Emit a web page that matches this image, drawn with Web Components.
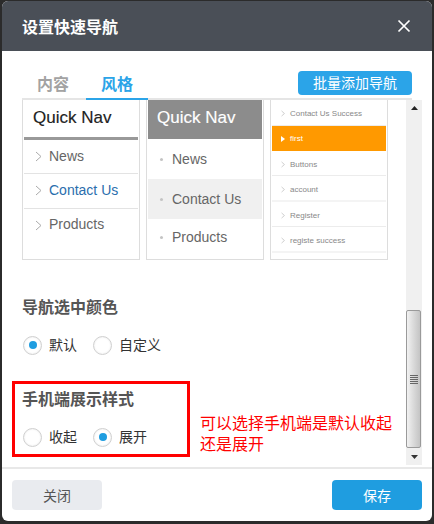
<!DOCTYPE html>
<html lang="zh">
<head>
<meta charset="utf-8">
<title>设置快速导航</title>
<style>
    html, body { margin: 0; height: 100%; background: #2b2b2b; }
    body { font-family: "Liberation Sans", "Noto Sans CJK SC", sans-serif; overflow: hidden; }
</style>
</head>
<body>
<quick-nav-dialog>
    <span slot="title">设置快速导航</span>
    <nav-tabs slot="tabs">
        <span slot="action">批量添加导航</span>
    </nav-tabs>
    <preview-row>
        <card-one></card-one>
        <card-two></card-two>
        <card-three></card-three>
    </preview-row>
    <option-group heading="导航选中颜色" style="margin-top:37px">
        <radio-item checked>默认</radio-item>
        <radio-item>自定义</radio-item>
    </option-group>
    <mobile-note>
        <option-group heading="手机端展示样式">
            <radio-item>收起</radio-item>
            <radio-item checked>展开</radio-item>
        </option-group>
        <span slot="note">可以选择手机端是默认收起还是展开</span>
    </mobile-note>
</quick-nav-dialog>

<script>
var tpl_dialog = document.createElement("template");
tpl_dialog.innerHTML = `
<style>
    :host { display: flex; flex-direction: column; box-sizing: border-box; width: 430px; height: 520px; margin: 1px 2px;
        background: #fff; border-radius: 6px; overflow: hidden; }
    #head { flex: none; height: 50px; background: #4a4f57; color: #fff; display: flex; align-items: center;
        justify-content: space-between; padding: 0 21px 0 20px; font-size: 16px; font-weight: 700; }
    #tabs { flex: none; padding: 20px 20px 0; }
    #middle { flex: none; height: 366px; display: flex; padding: 0 10px 0 20px; }
    #content { flex: 1; min-width: 0; position: relative; }
    #foot { flex: none; height: 52px; border-top: 2px solid #e8e8e8; margin-top: 1px; display: flex;
        justify-content: space-between; padding: 11px 10px 0; box-sizing: content-box; }
    .btn { width: 90px; height: 30px; border-radius: 4px; display: flex; align-items: center; justify-content: center; font-size: 14px; }
    #close { background: #e9ebef; color: #555; }
    #save { background: #1f9de0; color: #fff; }
</style>
<div id="head">
    <slot name="title"></slot>
    <svg width="14" height="14" viewBox="0 0 14 14"><path d="M1.5 1.5L12.5 12.5M12.5 1.5L1.5 12.5" stroke="#fff" stroke-width="1.7" fill="none"/></svg>
</div>
<div id="tabs"><slot name="tabs"></slot></div>
<div id="middle">
    <div id="content"><slot></slot></div>
    <fake-scrollbar></fake-scrollbar>
</div>
<div id="foot">
    <div class="btn" id="close">关闭</div>
    <div class="btn" id="save">保存</div>
</div>
`;
class QuickNavDialog extends HTMLElement {
    constructor(){
        super();
        this.attachShadow({mode:"open"}).appendChild(tpl_dialog.content.cloneNode(true));
    }
}

// tab strip with the blue button on the right
var tpl_tabs = document.createElement("template");
tpl_tabs.innerHTML = `
<style>
    :host { display: flex; height: 29px; box-sizing: border-box; border-bottom: 2px solid #e5e5e5; align-items: flex-start; }
    .tab { width: 62px; height: 29px; box-sizing: border-box; margin-right: 2px; text-align: center; font-size: 16px; font-weight: 700; line-height: 28px; color: #a3a3a3; }
    .tab.on { color: #2ba4e8; border-bottom: 2px solid #2ba4e8; }
    #action { margin-left: auto; width: 114px; height: 24px; background: #2ba4e8; color: #fff; border-radius: 4px;
        font-size: 14px; line-height: 24px; text-align: center; }
</style>
<div class="tab">内容</div>
<div class="tab on">风格</div>
<div id="action"><slot name="action"></slot></div>
`;
class NavTabs extends HTMLElement {
    constructor(){
        super();
        this.attachShadow({mode:"open"}).appendChild(tpl_tabs.content.cloneNode(true));
    }
}

// fake windows style scrollbar
var tpl_bar = document.createElement("template");
tpl_bar.innerHTML = `
<style>
    :host { display: flex; flex-direction: column; flex: none; width: 16px; height: 365px; background: #f0f0f0; box-sizing: border-box; }
    .arrow { flex: none; height: 16px; display: flex; align-items: center; justify-content: center; }
    #space { flex: 1; }
    #thumb { flex: none; height: 138px; margin: 0 1px 0 0; box-sizing: border-box; border: 1px solid #9a9a9a; border-radius: 2px;
        background: linear-gradient(to right, #f2f2f2, #dcdcdc 45%, #c4c4c4);
        display: flex; align-items: center; justify-content: center; }
</style>
<div class="arrow"><svg width="7" height="4"><path d="M3.5 0L7 4H0z" fill="#222"/></svg></div>
<div id="space"></div>
<div id="thumb"><svg width="8" height="9"><path d="M0 .5H8M0 2.5H8M0 4.5H8M0 6.5H8M0 8.5H8" stroke="#666" stroke-width="1"/></svg></div>
<div class="arrow" style="height:17px"><svg width="7" height="4"><path d="M0 0H7L3.5 4z" fill="#333"/></svg></div>
`;
class FakeScrollbar extends HTMLElement {
    constructor(){
        super();
        this.attachShadow({mode:"open"}).appendChild(tpl_bar.content.cloneNode(true));
    }
}

var tpl_row = document.createElement("template");
tpl_row.innerHTML = `
<style>
    :host { display: flex; gap: 6px; height: 160px; align-items: stretch; }
</style>
<slot></slot>
`;
class PreviewRow extends HTMLElement {
    constructor(){
        super();
        this.attachShadow({mode:"open"}).appendChild(tpl_row.content.cloneNode(true));
    }
}

var chevron = `<svg width="7" height="11" viewBox="0 0 7 11"><path d="M1 1L6 5.5L1 10" stroke="#aaa" fill="none"/></svg>`;
var small_chevron = chevron.replace('width="7" height="11"','width="4" height="7"');
var card_css = `
    :host { display: block; width: 118px; box-sizing: border-box; border: 1px solid #ddd; border-top: 0; padding: 0 1px; background: #fff; overflow: hidden; }
`;

// first style preview
var tpl_one = document.createElement("template");
tpl_one.innerHTML = `
<style>${card_css}
    #title { height: 40px; box-sizing: border-box; border-bottom: 3px solid #999; font-size: 17px; line-height: 36px; color: #222; padding-left: 9px; -webkit-text-stroke: .15px #222; }
    .row { height: 34px; box-sizing: border-box; display: flex; gap: 7px; padding-left: 11px; font-size: 14px; line-height: 32px; color: #666; border-bottom: 1px solid #e3e3e3; }
    .row svg { margin-top: 11px; }
    .row.on { color: #2a6ead; height: 35px; }
    .row:last-child { border-bottom: 0; line-height: 30px; }
</style>
<div id="title">Quick Nav</div>
<div class="row">${chevron}News</div>
<div class="row on">${chevron}Contact Us</div>
<div class="row">${chevron}Products</div>
`;
class CardOne extends HTMLElement {
    constructor(){
        super();
        this.attachShadow({mode:"open"}).appendChild(tpl_one.content.cloneNode(true));
    }
}

// second style preview
var tpl_two = document.createElement("template");
tpl_two.innerHTML = `
<style>${card_css}
    #title { height: 39px; background: #8c8c8c; color: #fff; font-size: 17px; line-height: 36px; padding-left: 9px; -webkit-text-stroke: .15px #fff; }
    .row { height: 40px; display: flex; align-items: center; gap: 9px; padding-left: 12px; font-size: 14px; color: #666; }
    .row.on { background: #f0f0f0; }
    .row:last-child { height: 36px; }
    .row i { width: 3px; height: 3px; border-radius: 50%; background: #c4c4c4; }
</style>
<div id="title">Quick Nav</div>
<div class="row"><i></i>News</div>
<div class="row on"><i></i>Contact Us</div>
<div class="row"><i></i>Products</div>
`;
class CardTwo extends HTMLElement {
    constructor(){
        super();
        this.attachShadow({mode:"open"}).appendChild(tpl_two.content.cloneNode(true));
    }
}

// third style preview
var tpl_three = document.createElement("template");
tpl_three.innerHTML = `
<style>${card_css}
    .row { height: 25.5px; box-sizing: border-box; display: flex; align-items: center; gap: 5px; padding: 3px 0 0 9px; font-size: 8px; color: #888; border-bottom: 1px solid #ececec; }
    .row:first-child { height: 27px; border-bottom-color: #e4e4e4; padding-top: 2px; }
    .row.on { background: #ff9900; color: #fff; border-bottom: 0; height: 25px; padding-top: 1px; }
    .row svg { flex: none; }
</style>
<div class="row">${small_chevron}Contact Us Success</div>
<div class="row on"><svg width="4" height="6"><path d="M0 0L4 3L0 6z" fill="#fff"/></svg>first</div>
<div class="row">${small_chevron}Buttons</div>
<div class="row" style="border-bottom-width:2px;border-bottom-color:#f4f4f4">${small_chevron}account</div>
<div class="row">${small_chevron}Register</div>
<div class="row" style="border-bottom-width:2px;border-bottom-color:#f4f4f4">${small_chevron}registe success</div>
`;
class CardThree extends HTMLElement {
    constructor(){
        super();
        this.attachShadow({mode:"open"}).appendChild(tpl_three.content.cloneNode(true));
    }
}

// heading and a row of radios
var tpl_group = document.createElement("template");
tpl_group.innerHTML = `
<style>
    :host { display: block; }
    #h { font-size: 16px; font-weight: 700; color: #555; line-height: 22px; }
    #opts { display: flex; gap: 16px; margin: 16px 0 0 1px; }
</style>
<div id="h"></div>
<div id="opts"><slot></slot></div>
`;
class OptionGroup extends HTMLElement {
    constructor(){
        super();
        this.attachShadow({mode:"open"}).appendChild(tpl_group.content.cloneNode(true));
    }
    connectedCallback(){
        this.shadowRoot.querySelector("#h").innerHTML = this.getAttribute("heading");
    }
}

var tpl_radio = document.createElement("template");
tpl_radio.innerHTML = `
<style>
    :host { display: inline-flex; align-items: center; gap: 7px; font-size: 14px; color: #333; line-height: 20px; }
    #c { width: 19px; height: 19px; box-sizing: border-box; border: 1px solid #d0d0d0; border-radius: 50%; background: #fff;
        display: flex; align-items: center; justify-content: center; box-shadow: inset 0 0 2px #e5e5e5; }
    #d { width: 8px; height: 8px; border-radius: 50%; background: #1f9de0; display: none; }
    :host([checked]) #d { display: block; }
</style>
<div id="c"><div id="d"></div></div>
<slot></slot>
`;
class RadioItem extends HTMLElement {
    constructor(){
        super();
        this.attachShadow({mode:"open"}).appendChild(tpl_radio.content.cloneNode(true));
    }
}

// red annotation box and note beside the mobile options
var tpl_note = document.createElement("template");
tpl_note.innerHTML = `
<style>
    :host { display: flex; margin: 26px 0 0 -10px; gap: 10px; align-items: flex-start; }
    #box { flex: none; width: 178px; height: 76px; box-sizing: border-box; border: 3px solid #ff0000; padding: 5px 0 0 7px; }
    #note { flex: none; width: 195px; margin-top: 32px; color: #ff0000; font-size: 16px; line-height: 21px; }
</style>
<div id="box"><slot></slot></div>
<div id="note"><slot name="note"></slot></div>
`;
class MobileNote extends HTMLElement {
    constructor(){
        super();
        this.attachShadow({mode:"open"}).appendChild(tpl_note.content.cloneNode(true));
    }
}

customElements.define("fake-scrollbar", FakeScrollbar);
customElements.define("nav-tabs", NavTabs);
customElements.define("preview-row", PreviewRow);
customElements.define("card-one", CardOne);
customElements.define("card-two", CardTwo);
customElements.define("card-three", CardThree);
customElements.define("radio-item", RadioItem);
customElements.define("option-group", OptionGroup);
customElements.define("mobile-note", MobileNote);
customElements.define("quick-nav-dialog", QuickNavDialog);
</script>
</body>
</html>
